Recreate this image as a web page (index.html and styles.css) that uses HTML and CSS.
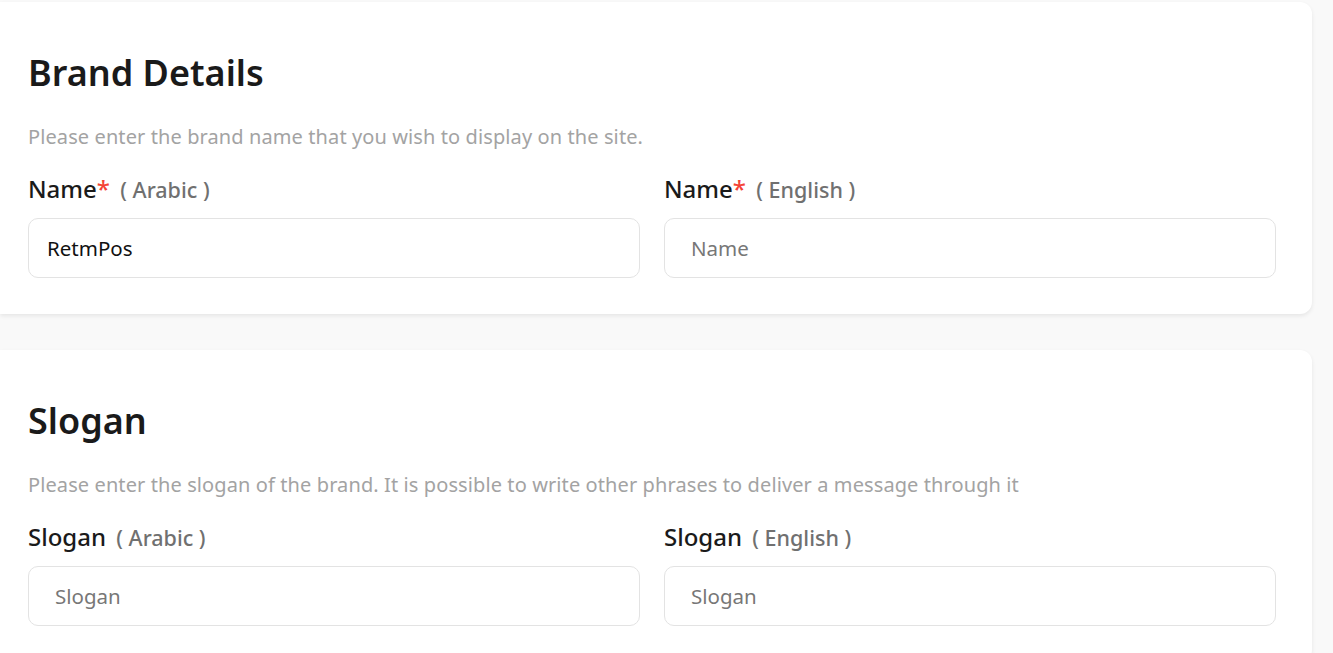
FILE: index.html
```html
<!DOCTYPE html>
<html lang="en">
<head>
    <meta charset="UTF-8">
    <meta name="viewport" content="width=device-width, initial-scale=1.0">
    <title>Brand Settings</title>
    <link rel="stylesheet" href="styles.css">
</head>
<body>
    <div class="page">
        <section class="card">
            <h2 class="card-title">Brand Details</h2>
            <p class="card-desc">Please enter the brand name that you wish to display on the site.</p>
            <div class="field-grid">
                <div class="field">
                    <label class="field-label">Name<span class="required">*</span> <span class="lang">( Arabic )</span></label>
                    <input type="text" class="field-input is-filled" value="RetmPos">
                </div>
                <div class="field">
                    <label class="field-label">Name<span class="required">*</span> <span class="lang">( English )</span></label>
                    <input type="text" class="field-input" placeholder="Name">
                </div>
            </div>
        </section>

        <section class="card">
            <h2 class="card-title">Slogan</h2>
            <p class="card-desc">Please enter the slogan of the brand. It is possible to write other phrases to deliver a message through it</p>
            <div class="field-grid">
                <div class="field">
                    <label class="field-label">Slogan <span class="lang">( Arabic )</span></label>
                    <input type="text" class="field-input" placeholder="Slogan">
                </div>
                <div class="field">
                    <label class="field-label">Slogan <span class="lang">( English )</span></label>
                    <input type="text" class="field-input" placeholder="Slogan">
                </div>
            </div>
        </section>
    </div>
</body>
</html>
```

FILE: styles.css
```css
/* 基本 */
body {
    font-family: "Noto Sans", "Open Sans", Arial, sans-serif;
    margin: 0;
    background-color: #f9f9f9;
    color: #1a1a1a;
}
.page {
    padding: 2px 21px 0 0;
    display: flex;
    flex-direction: column;
    gap: 36px;
}

/* カード */
.card {
    background-color: #fff;
    border-radius: 0 12px 12px 0;
    box-shadow: 0 2px 4px rgba(0,0,0,0.08);
    padding: 47px 36px 36px 28px;
}
.card-title {
    margin: 0;
    font-size: 36px;
    font-weight: 600;
    line-height: 48px;
    color: #1a1a1a;
}
.card-desc {
    margin: 26px 0 22px;
    font-size: 20px;
    letter-spacing: 0.1px;
    line-height: 28px;
    color: #a3a3a3;
}

/* フォーム */
.field-grid {
    display: grid;
    grid-template-columns: 1fr 1fr;
    gap: 24px;
}
.field { display: flex; flex-direction: column; gap: 12px; }
.field-label {
    font-size: 24px;
    font-weight: 500;
    line-height: 32px;
}
.required { color: #f44336; }
.lang {
    margin-left: 4px;
    font-size: 21.5px;
    color: #707070;
}
.field-input {
    box-sizing: border-box;
    width: 100%;
    height: 60px;
    padding: 0 26px;
    border: 1px solid #e3e3e3;
    border-radius: 10px;
    font-family: inherit;
    font-size: 20.5px;
    color: #111;
    outline: none;
}
.field-input.is-filled { padding-left: 18px; }
.field-input::placeholder { color: #777; }
```
